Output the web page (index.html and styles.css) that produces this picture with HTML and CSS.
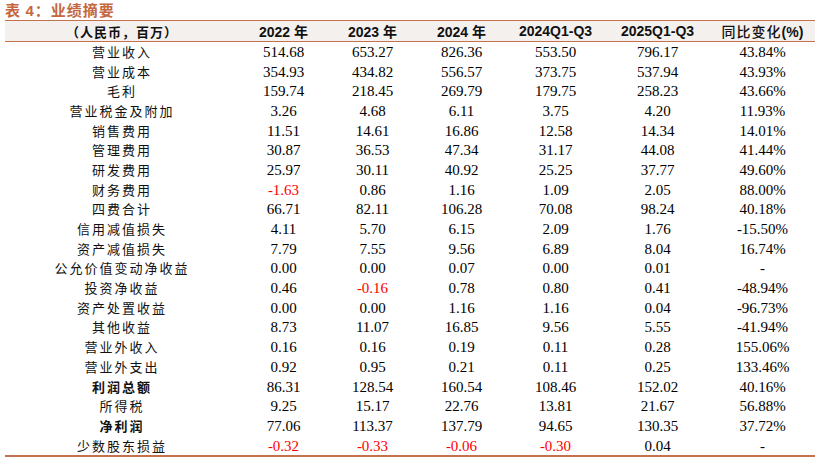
FILE: index.html
```html
<!DOCTYPE html>
<html lang="zh-CN">
<head>
<meta charset="utf-8">
<title>业绩摘要</title>
<link rel="stylesheet" href="styles.css">
</head>
<body>
<div class="title">表 <b>4</b>：业绩摘要</div>
<table class="summary">
  <colgroup>
    <col class="c-label"><col class="c-y"><col class="c-y"><col class="c-y"><col class="c-q4"><col class="c-q5"><col class="c-p">
  </colgroup>
  <thead>
    <tr>
      <th class="hlabel">（人民币，百万）</th>
      <th>2022 年</th>
      <th>2023 年</th>
      <th>2024 年</th>
      <th>2024Q1-Q3</th>
      <th>2025Q1-Q3</th>
      <th class="hcn"><span class="cn">同比变化</span>(%)</th>
    </tr>
  </thead>
  <tbody>
    <tr><td class="lbl">营业收入</td><td>514.68</td><td>653.27</td><td>826.36</td><td>553.50</td><td>796.17</td><td>43.84%</td></tr>
    <tr><td class="lbl">营业成本</td><td>354.93</td><td>434.82</td><td>556.57</td><td>373.75</td><td>537.94</td><td>43.93%</td></tr>
    <tr><td class="lbl">毛利</td><td>159.74</td><td>218.45</td><td>269.79</td><td>179.75</td><td>258.23</td><td>43.66%</td></tr>
    <tr><td class="lbl">营业税金及附加</td><td>3.26</td><td>4.68</td><td>6.11</td><td>3.75</td><td>4.20</td><td>11.93%</td></tr>
    <tr><td class="lbl">销售费用</td><td>11.51</td><td>14.61</td><td>16.86</td><td>12.58</td><td>14.34</td><td>14.01%</td></tr>
    <tr><td class="lbl">管理费用</td><td>30.87</td><td>36.53</td><td>47.34</td><td>31.17</td><td>44.08</td><td>41.44%</td></tr>
    <tr><td class="lbl">研发费用</td><td>25.97</td><td>30.11</td><td>40.92</td><td>25.25</td><td>37.77</td><td>49.60%</td></tr>
    <tr><td class="lbl">财务费用</td><td class="neg">-1.63</td><td>0.86</td><td>1.16</td><td>1.09</td><td>2.05</td><td>88.00%</td></tr>
    <tr><td class="lbl">四费合计</td><td>66.71</td><td>82.11</td><td>106.28</td><td>70.08</td><td>98.24</td><td>40.18%</td></tr>
    <tr><td class="lbl">信用减值损失</td><td>4.11</td><td>5.70</td><td>6.15</td><td>2.09</td><td>1.76</td><td>-15.50%</td></tr>
    <tr><td class="lbl">资产减值损失</td><td>7.79</td><td>7.55</td><td>9.56</td><td>6.89</td><td>8.04</td><td>16.74%</td></tr>
    <tr><td class="lbl">公允价值变动净收益</td><td>0.00</td><td>0.00</td><td>0.07</td><td>0.00</td><td>0.01</td><td>-</td></tr>
    <tr><td class="lbl">投资净收益</td><td>0.46</td><td class="neg">-0.16</td><td>0.78</td><td>0.80</td><td>0.41</td><td>-48.94%</td></tr>
    <tr><td class="lbl">资产处置收益</td><td>0.00</td><td>0.00</td><td>1.16</td><td>1.16</td><td>0.04</td><td>-96.73%</td></tr>
    <tr><td class="lbl">其他收益</td><td>8.73</td><td>11.07</td><td>16.85</td><td>9.56</td><td>5.55</td><td>-41.94%</td></tr>
    <tr><td class="lbl">营业外收入</td><td>0.16</td><td>0.16</td><td>0.19</td><td>0.11</td><td>0.28</td><td>155.06%</td></tr>
    <tr><td class="lbl">营业外支出</td><td>0.92</td><td>0.95</td><td>0.21</td><td>0.11</td><td>0.25</td><td>133.46%</td></tr>
    <tr><td class="lbl strong">利润总额</td><td>86.31</td><td>128.54</td><td>160.54</td><td>108.46</td><td>152.02</td><td>40.16%</td></tr>
    <tr><td class="lbl">所得税</td><td>9.25</td><td>15.17</td><td>22.76</td><td>13.81</td><td>21.67</td><td>56.88%</td></tr>
    <tr><td class="lbl strong">净利润</td><td>77.06</td><td>113.37</td><td>137.79</td><td>94.65</td><td>130.35</td><td>37.72%</td></tr>
    <tr><td class="lbl">少数股东损益</td><td class="neg">-0.32</td><td class="neg">-0.33</td><td class="neg">-0.06</td><td class="neg">-0.30</td><td>0.04</td><td>-</td></tr>
  </tbody>
</table>
</body>
</html>
```

FILE: styles.css
```css
html, body {
  margin: 0;
  padding: 0;
  background: #ffffff;
}
body {
  padding: 0 9px 0 5px;
  font-family: "Liberation Serif", "Noto Sans CJK SC", serif;
  color: #000;
}
.title {
  height: 20px;
  line-height: 20px;
  font-family: "Noto Sans CJK SC", sans-serif;
  font-size: 15px;
  font-weight: 700;
  color: #c4673f;
  letter-spacing: 1px;
}
.title b {
  font-family: "Liberation Sans", sans-serif;
  font-weight: 700;
}
.summary {
  border-collapse: collapse;
  table-layout: fixed;
  width: 810px;
}
.c-label { width: 234px; }
.c-y { width: 89px; }
.c-q4 { width: 99px; }
.c-q5 { width: 105px; }
.c-p { width: 105px; }

.summary thead tr {
  background: #f4f0ee;
  border-top: 1px solid #c4714f;
  border-bottom: 1px solid #c4714f;
}
.summary th {
  height: 18px;
  padding: 0;
  font-family: "Liberation Sans", "Noto Sans CJK SC", sans-serif;
  font-size: 14px;
  font-weight: 700;
  text-align: center;
  color: #111;
  white-space: nowrap;
}
.summary th.hlabel {
  font-family: "Noto Sans CJK SC", sans-serif;
  font-size: 13px;
  letter-spacing: 1px;
}
.summary th .cn {
  font-family: "Noto Sans CJK SC", sans-serif;
  font-weight: 500;
  letter-spacing: 1px;
}
.summary tbody tr:last-child {
  border-bottom: 2px solid #c4714f;
}
.summary td {
  height: 19.7px;
  padding: 0;
  font-size: 15px;
  line-height: 18px;
  text-align: center;
  white-space: nowrap;
}
.summary td.lbl {
  font-family: "Noto Sans CJK SC", serif;
  font-size: 13px;
  letter-spacing: 2px;
  font-weight: 400;
  color: #111;
}
.summary td.lbl.strong {
  font-weight: 700;
}
.summary td.neg {
  color: #ff0000;
}
```
